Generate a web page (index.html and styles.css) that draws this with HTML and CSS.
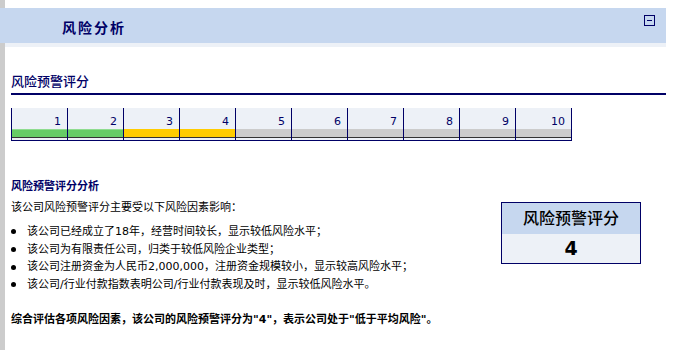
FILE: index.html
```html
<!DOCTYPE html>
<html lang="zh-CN">
<head>
  <meta charset="UTF-8">
  <meta name="viewport" content="width=device-width, initial-scale=1.0">
  <title>风险分析</title>
  <link rel="stylesheet" href="styles.css">
</head>
<body>
  <div class="page">
    <div class="panel-head">
      <span class="panel-title">风险分析</span>
      <svg class="collapse" width="11" height="11" viewBox="0 0 11 11">
        <rect x="0.5" y="0.5" width="10" height="10" fill="none" stroke="#000066"/>
        <line x1="3" y1="5.5" x2="8" y2="5.5" stroke="#000066"/>
      </svg>
    </div>
    <div class="panel-strip"></div>

    <div class="panel-body">
      <h3 class="sec-title">风险预警评分</h3>

      <div class="scale">
        <div class="scale-cell"><div class="scale-num">1</div><div class="scale-bar green"></div><div class="scale-foot"></div></div>
        <div class="scale-cell"><div class="scale-num">2</div><div class="scale-bar green"></div><div class="scale-foot"></div></div>
        <div class="scale-cell"><div class="scale-num">3</div><div class="scale-bar yellow"></div><div class="scale-foot"></div></div>
        <div class="scale-cell"><div class="scale-num">4</div><div class="scale-bar yellow"></div><div class="scale-foot"></div></div>
        <div class="scale-cell"><div class="scale-num">5</div><div class="scale-bar grey"></div><div class="scale-foot"></div></div>
        <div class="scale-cell"><div class="scale-num">6</div><div class="scale-bar grey"></div><div class="scale-foot"></div></div>
        <div class="scale-cell"><div class="scale-num">7</div><div class="scale-bar grey"></div><div class="scale-foot"></div></div>
        <div class="scale-cell"><div class="scale-num">8</div><div class="scale-bar grey"></div><div class="scale-foot"></div></div>
        <div class="scale-cell"><div class="scale-num">9</div><div class="scale-bar grey"></div><div class="scale-foot"></div></div>
        <div class="scale-cell"><div class="scale-num">10</div><div class="scale-bar grey"></div><div class="scale-foot"></div></div>
      </div>

      <div class="analysis-title">风险预警评分分析</div>
      <div class="analysis">
        <div class="analysis-text">
          <p class="intro">该公司风险预警评分主要受以下风险因素影响：</p>
          <ul class="factors">
            <li>该公司已经成立了18年，经营时间较长，显示较低风险水平；</li>
            <li>该公司为有限责任公司，归类于较低风险企业类型；</li>
            <li>该公司注册资金为人民币2,000,000，注册资金规模较小，显示较高风险水平；</li>
            <li>该公司/行业付款指数表明公司/行业付款表现及时，显示较低风险水平。</li>
          </ul>
        </div>
        <div class="score-box">
          <div class="score-head">风险预警评分</div>
          <div class="score-value">4</div>
        </div>
      </div>

      <p class="conclusion">综合评估各项风险因素，该公司的风险预警评分为"4"，表示公司处于"低于平均风险"。</p>
    </div>
  </div>
</body>
</html>
```

FILE: styles.css
```css
:root {
  --navy: #000066;
  --head-blue: #c6d7ef;
  --pale: #edf1f7;
  --side-grey: #cccccc;
}
body {
  margin: 0;
  background: #fff;
  color: #000;
  font-family: "DejaVu Sans", "Noto Sans CJK SC", sans-serif;
  font-size: 11px;
}
.page {
  border-left: 5px solid var(--side-grey);
  width: 661px;
  min-height: 342px;
  padding-top: 8px;
}

/* panel header */
.panel-head {
  margin-left: -5px;
  height: 35px;
  background: var(--head-blue);
  display: flex;
  align-items: flex-start;
  padding: 0 11px 0 62px;
}
.panel-title {
  margin-top: 5px;
  line-height: 30px;
  font-size: 14px;
  font-weight: bold;
  letter-spacing: 2px;
  color: var(--navy);
}
.collapse { margin-left: auto; margin-top: 7px; }
.panel-strip { height: 4px; background: var(--pale); }
.panel-body { padding-left: 6px; }

.sec-title {
  margin: 26px 0 0;
  font-size: 13px;
  font-weight: 500;
  line-height: 18px;
  padding-bottom: 2px;
  border-bottom: 2px solid var(--navy);
  color: var(--navy);
}

/* score scale */
.scale {
  display: flex;
  width: fit-content;
  margin-top: 13px;
  border-bottom: 1px solid var(--navy);
}
.scale-cell { width: 55px; border-left: 1px solid var(--navy); }
.scale-cell:last-child { border-right: 1px solid var(--navy); }
.scale-num {
  height: 21px;
  box-sizing: border-box;
  padding: 7px 6px 0 0;
  line-height: 14px;
  text-align: right;
  background: var(--pale);
  color: var(--navy);
}
.scale-bar { height: 8px; border-bottom: 1px solid #333; }
.scale-foot { height: 2px; background: var(--pale); }
.green { background: #66cc66; box-shadow: inset 0 1px 0 #8fdc8f; }
.yellow { background: #ffcc00; }
.grey { background: #cccccc; }

/* analysis */
.analysis-title {
  margin-top: 38px;
  line-height: 16px;
  font-weight: bold;
  color: var(--navy);
}
.analysis { display: flex; margin-top: 4px; }
.analysis-text { flex: 1; }
.intro { margin: 0; line-height: 18px; }
.factors { list-style: none; margin: 6px 0 0; padding: 0; }
.factors li { display: flex; align-items: center; line-height: 17.7px; }
.factors li::before {
  content: "";
  width: 5px; height: 5px;
  border-radius: 50%;
  background: #000;
  margin-right: 11px;
  flex-shrink: 0;
}
.score-box {
  width: 140px;
  box-sizing: border-box;
  border: 1px solid var(--navy);
  margin: 3px 25px 0 0;
  align-self: flex-start;
  text-align: center;
}
.score-head {
  height: 31px;
  line-height: 31px;
  background: var(--head-blue);
  font-size: 16px;
  font-weight: 500;
}
.score-value {
  height: 29px;
  line-height: 29px;
  background: var(--pale);
  font-size: 19px;
  font-weight: bold;
}
.conclusion {
  margin: 18px 0 0;
  line-height: 16px;
  font-weight: bold;
}
```
